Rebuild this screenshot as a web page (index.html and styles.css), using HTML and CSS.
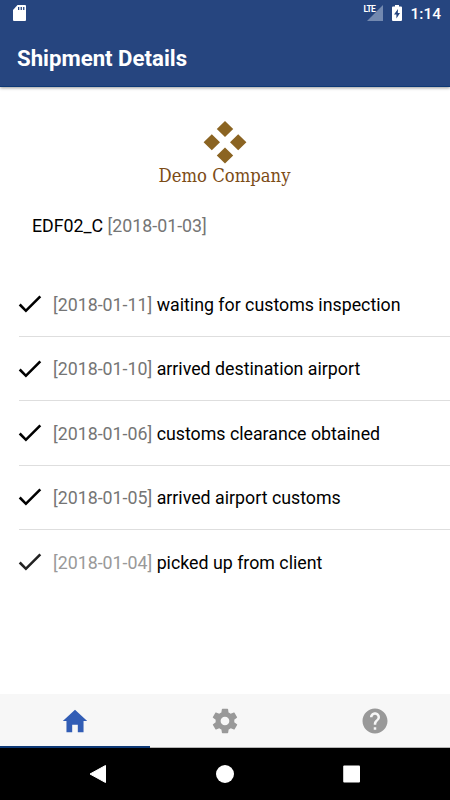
FILE: index.html
```html
<!DOCTYPE html>
<html lang="en">
<head>
  <meta charset="utf-8">
  <title>Shipment Details</title>
  <link rel="stylesheet" href="styles.css">
</head>
<body>
  <header class="header">
    <div class="status-bar">
      <svg class="sd-card" viewBox="0 0 13 16"><path d="M4.5 0H12a1 1 0 0 1 1 1v14a1 1 0 0 1-1 1H1a1 1 0 0 1-1-1V5z" fill="#fff"/><path d="M5 2h1.3v3H5zM7.6 2h1.3v3H7.600zM10.100 2h1.300v3h-1.300z" fill="#26457f"/></svg>
      <div class="status-right">
        <span class="signal"><span class="lte">LTE</span><svg viewBox="0 0 16 16" width="16" height="16"><path d="M16 0v16H0z" fill="#7389b0"/></svg></span>
        <svg class="battery" viewBox="0 0 10 16"><path d="M3 0h4v1.500h2a1 1 0 0 1 1 1V15a1 1 0 0 1-1 1H1a1 1 0 0 1-1-1V2.500a1 1 0 0 1 1-1h2z" fill="#fff"/><path d="M6 4L2 9.500h2.400V13.500L8 8H5.800z" fill="#26457f"/></svg>
        <span class="clock">1:14</span>
      </div>
    </div>
    <h1 class="title">Shipment Details</h1>
  </header>

  <main class="content">
    <div class="logo">
      <svg viewBox="0 0 134 68" width="134" height="68">
        <path d="M67 0l8.200 8-8.200 8-8.200-8zM53.800 13.300l8.200 8-8.200 8-8.200-8zM80.200 13.300l8.200 8-8.200 8-8.200-8zM67 26.600l8.200 8-8.200 8-8.200-8z" fill="#8b6422"/>
        <text class="logo-text" x="0.500" y="60.500" textLength="132" lengthAdjust="spacingAndGlyphs">Demo Company</text>
      </svg>
    </div>
    <p class="shipment">EDF02_C <span class="date">[2018-01-03]</span></p>
    <ul class="events">
      <li class="event">
        <svg class="icon" viewBox="0 0 512 512"><path d="M186.300 339.900L96 249.500l-32 30.500L186.300 402 448 140.500 416 110z"/></svg>
        <p><span class="date">[2018-01-11]</span> waiting for customs inspection</p>
      </li>
      <li class="event">
        <svg class="icon" viewBox="0 0 512 512"><path d="M186.300 339.900L96 249.500l-32 30.500L186.300 402 448 140.500 416 110z"/></svg>
        <p><span class="date">[2018-01-10]</span> arrived destination airport</p>
      </li>
      <li class="event">
        <svg class="icon" viewBox="0 0 512 512"><path d="M186.300 339.900L96 249.500l-32 30.500L186.300 402 448 140.500 416 110z"/></svg>
        <p><span class="date">[2018-01-06]</span> customs clearance obtained</p>
      </li>
      <li class="event">
        <svg class="icon" viewBox="0 0 512 512"><path d="M186.300 339.900L96 249.500l-32 30.500L186.300 402 448 140.500 416 110z"/></svg>
        <p><span class="date">[2018-01-05]</span> arrived airport customs</p>
      </li>
      <li class="event first-event">
        <svg class="icon" viewBox="0 0 512 512"><path d="M186.300 339.900L96 249.500l-32 30.500L186.300 402 448 140.500 416 110z"/></svg>
        <p><span class="date">[2018-01-04]</span> picked up from client</p>
      </li>
    </ul>
  </main>

  <nav class="tabs">
    <a class="tab active"><svg class="icon" viewBox="0 0 512 512"><path d="M208 448V320h96v128h97.600V256H464L256 64 48 256h62.400v192z"/></svg></a>
    <a class="tab"><svg class="icon" viewBox="0 0 512 512"><path d="M413.967 276.8c1.06-6.235 1.06-13.518 1.06-20.8s-1.06-13.518-1.06-20.8l44.667-34.318c4.26-3.118 5.319-8.317 2.13-13.518L418.215 115.6c-2.129-4.164-8.507-6.235-12.767-4.164l-53.186 20.801c-10.638-8.32-23.394-15.601-36.16-20.801l-7.448-55.117c-1.06-4.154-5.319-8.318-10.638-8.318h-85.098c-5.318 0-9.577 4.164-10.637 8.318l-8.508 55.117c-12.767 5.2-24.464 12.482-36.171 20.801l-53.186-20.801c-5.319-2.071-10.638 0-12.767 4.164L49.1 187.365c-2.119 4.153-1.061 10.399 2.129 13.518L96.97 235.2c0 7.282-1.06 13.518-1.06 20.8s1.06 13.518 1.06 20.8l-44.668 34.318c-4.26 3.118-5.318 8.317-2.13 13.518L92.721 396.4c2.13 4.164 8.508 6.235 12.767 4.164l53.187-20.801c10.637 8.32 23.394 15.601 36.16 20.801l8.508 55.117c1.069 5.2 5.318 8.318 10.637 8.318h85.098c5.319 0 9.578-4.164 10.638-8.318l8.518-55.117c12.757-5.2 24.464-12.482 36.16-20.801l53.187 20.801c5.318 2.071 10.637 0 12.767-4.164l42.549-71.765c2.129-4.153 1.06-10.399-2.13-13.518l-46.8-34.317zm-158.499 52c-41.489 0-74.46-32.235-74.46-72.8s32.971-72.8 74.46-72.8 74.461 32.235 74.461 72.8-32.972 72.8-74.461 72.8z"/></svg></a>
    <a class="tab"><svg class="icon" viewBox="0 0 24 24"><path d="M12 2C6.480 2 2 6.480 2 12s4.480 10 10 10 10-4.480 10-10S17.520 2 12 2zm1 17h-2v-2h2v2zm2.070-7.750l-.9.920C13.450 12.900 13 13.500 13 15h-2v-.5c0-1.100.450-2.100 1.170-2.830l1.240-1.260c.370-.360.590-.860.590-1.410 0-1.100-.9-2-2-2s-2 .9-2 2H8c0-2.210 1.790-4 4-4s4 1.790 4 4c0 .880-.360 1.680-.930 2.250z"/></svg></a>
  </nav>

  <div class="nav-bar">
    <svg viewBox="0 0 20 20" width="20" height="20"><path d="M17.500 1.500v17L2 10z" stroke="#fff" stroke-linejoin="round"/></svg>
    <svg viewBox="0 0 20 20" width="20" height="20"><circle cx="10" cy="10" r="9"/></svg>
    <svg viewBox="0 0 20 20" width="20" height="20"><rect x="1.200" y="1.500" width="16.800" height="17" rx="1"/></svg>
  </div>
</body>
</html>
```
FILE: styles.css
```css
* { box-sizing: border-box; }
body { margin: 0; height: 800px; display: flex; flex-direction: column; background: #fff; color: #000; font-family: Roboto, sans-serif; font-size: 17.800px; overflow: hidden; }
p, h1, ul { margin: 0; padding: 0; }
svg { display: block; flex: none; }

.header { height: 87px; background: #26457f; color: #fff; border-bottom: 1px solid #0d3875; box-shadow: 0 1px 3px rgba(0, 0, 0, .4); }
.status-bar { height: 28px; padding: 0 9px 0 13px; display: flex; justify-content: space-between; align-items: center; }
.sd-card { width: 13px; height: 16px; margin-top: -2px; }
.status-right { display: flex; align-items: center; }
.signal { position: relative; margin-right: 9px; margin-top: -2px; }
.lte { position: absolute; left: -4px; top: -1px; font-size: 8.500px; line-height: 10px; font-weight: 700; letter-spacing: -.7px; }
.battery { width: 10px; height: 16px; margin-right: 8px; margin-top: -2px; }
.clock { font-size: 15.500px; line-height: 28px; font-weight: 500; }
.title { padding-left: 17px; font-size: 22.200px; line-height: 60px; font-weight: 700; }

.content { flex: 1; padding-top: 34px; }
.logo { display: flex; justify-content: center; }
.logo-text { font-family: "DejaVu Serif Condensed", "DejaVu Serif", serif; font-size: 18.500px; fill: #7c4c16; }
.shipment { padding-left: 32px; margin-top: 26px; line-height: 22px; }
.date { color: #757575; }

.events { margin-top: 35.800px; padding-left: 19px; list-style: none; }
.event { height: 64.300px; display: flex; align-items: center; border-bottom: 1px solid #dedede; white-space: nowrap; }
.event:last-child { border-bottom: none; }
.event .icon { width: 30px; height: 30px; margin: 0 8px 0 -4px; }
.first-event .date { color: #999; }
.first-event .icon { fill: #222; }

.tabs { height: 54px; display: flex; background: #f7f7f7; }
.tab { flex: 1; display: flex; justify-content: center; align-items: center; padding-top: 1px; border-bottom: 1px solid #b5b5b5; fill: #999; }
.tab .icon { width: 30px; height: 30px; }
.active { border-bottom: 2px solid #0d3875; fill: #325db5; }

.nav-bar { height: 52px; padding: 0 88px; display: flex; justify-content: space-between; align-items: center; background: #000; fill: #fff; }
```
